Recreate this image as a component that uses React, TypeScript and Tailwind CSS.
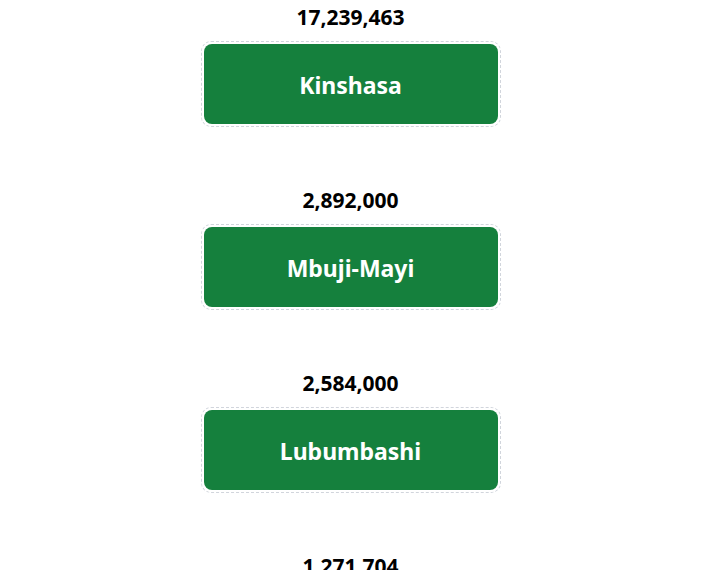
const cities = [
  { name: "Kinshasa", pop: "17,239,463" },
  { name: "Mbuji-Mayi", pop: "2,892,000" },
  { name: "Lubumbashi", pop: "2,584,000" },
  { name: "Kananga", pop: "1,271,704" },
];

export default function App() {
  return (
    <div className="flex flex-col items-center pr-[6px] pt-[3px] bg-white" style={{ fontFamily: '"Noto Sans", sans-serif' }}>
      {cities.map((c) => (
        <div key={c.name} className="flex flex-col items-center mb-[59px]">
          <p className="text-[21px] leading-[28px] font-bold text-black">{c.pop}</p>
          <div className="mt-[10px] w-[300px] h-[86px] p-[2px] border border-dashed border-gray-300 rounded-[10px]">
            <div className="w-full h-full flex items-center justify-center bg-[#15803d] rounded-[8px]">
              <span className="pt-[3px] text-[23px] font-bold text-white">{c.name}</span>
            </div>
          </div>
        </div>
      ))}
    </div>
  );
}
